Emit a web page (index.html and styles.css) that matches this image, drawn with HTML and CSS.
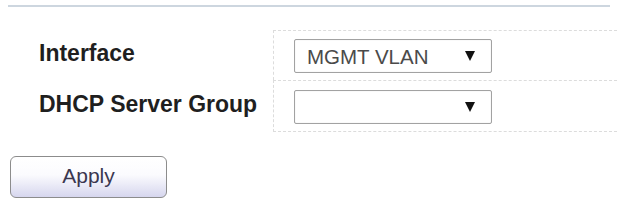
FILE: index.html
```html
<!DOCTYPE html>
<html lang="en">
<head>
    <meta charset="UTF-8">
    <title>DHCP Relay</title>
    <link rel="stylesheet" href="styles.css">
</head>
<body>
    <div class="rule"></div>

    <div class="form">
        <div class="label">Interface</div>
        <div class="value">
            <div class="select">
                <span class="select-text">MGMT VLAN</span>
                <span class="arrow"></span>
            </div>
        </div>

        <div class="label">DHCP Server Group</div>
        <div class="value last">
            <div class="select">
                <span class="select-text"></span>
                <span class="arrow"></span>
            </div>
        </div>
    </div>

    <button class="apply">Apply</button>
</body>
</html>
```

FILE: styles.css
```css
/* page */
body {
    margin: 0;
    padding: 0;
    font-family: "Liberation Sans", Arial, sans-serif;
    background: #fff;
}

.rule {
    height: 2px;
    margin: 5px 8px 0 8px;
    background: #cdd6df;
}

/* form table */
.form {
    display: grid;
    grid-template-columns: 273px 1fr;
    grid-template-rows: 50px 52px;
    margin-top: 23px;
    margin-right: 1px;
}

.label {
    display: flex;
    align-items: center;
    padding: 0 0 4px 39px;
    font-size: 23px;
    font-weight: bold;
    color: #1f1f1f;
    white-space: nowrap;
}

.value {
    display: flex;
    align-items: center;
    box-sizing: border-box;
    padding-left: 20px;
    border-top: 1px dashed #dcdcdc;
    border-left: 1px dashed #dcdcdc;
}

.value.last {
    border-bottom: 1px dashed #dcdcdc;
    padding-top: 2px;
}

.select {
    display: flex;
    align-items: center;
    justify-content: space-between;
    box-sizing: border-box;
    width: 198px;
    height: 34px;
    padding: 3px 16px 0 12px;
    border: 1px solid #a2a2a2;
    border-radius: 2px;
    box-shadow: inset 0 0 1px #ccc;
    background: #fff;
}

.select-text {
    font-size: 20.5px;
    color: #4a4a4a;
}

.arrow {
    width: 0;
    height: 0;
    margin-top: -3px;
    border-left: 5px solid transparent;
    border-right: 5px solid transparent;
    border-top: 10px solid #111;
}

/* button */
.apply {
    display: block;
    width: 157px;
    height: 42px;
    margin: 24px 0 0 10px;
    padding: 0 0 3px 0;
    border: 1px solid #8c8c8c;
    border-radius: 6px;
    background: linear-gradient(#fff 0%, #fbfbfe 45%, #d6d6ee 100%);
    font-family: "Liberation Sans", Arial, sans-serif;
    font-size: 21px;
    color: #3b3750;
}
```
